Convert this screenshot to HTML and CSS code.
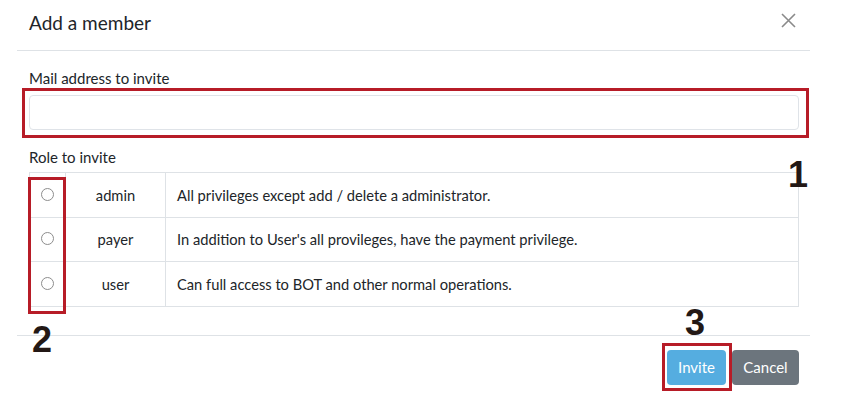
FILE: index.html
```html
<!DOCTYPE html>
<html lang="en">
<head>
<meta charset="utf-8">
<title>Add a member</title>
<link rel="stylesheet" href="styles.css">
</head>
<body>
<div class="modal">
  <div class="modal-header">
    <h5 class="modal-title">Add a member</h5>
    <button class="close" type="button" aria-label="Close">
      <svg width="15" height="15" viewBox="0 0 15 15"><path d="M1 1 L14 14 M14 1 L1 14" stroke="#8a8a8a" stroke-width="1.6" fill="none"/></svg>
    </button>
  </div>
  <div class="modal-body">
    <label class="label">Mail address to invite</label>
    <div class="field">
      <input class="input" type="text">
      <span class="mark mark-input"></span>
    </div>
    <label class="label role-label">Role to invite</label>
    <div class="table-wrap">
      <table class="roles">
        <tr>
          <td class="c-radio"><span class="radio"></span></td>
          <td class="c-role">admin</td>
          <td class="c-desc">All privileges except add / delete a administrator.</td>
        </tr>
        <tr>
          <td class="c-radio"><span class="radio"></span></td>
          <td class="c-role">payer</td>
          <td class="c-desc">In addition to User's all provileges, have the payment privilege.</td>
        </tr>
        <tr>
          <td class="c-radio"><span class="radio"></span></td>
          <td class="c-role">user</td>
          <td class="c-desc">Can full access to BOT and other normal operations.</td>
        </tr>
      </table>
      <span class="mark mark-radio"></span>
      <span class="num num1">1</span>
      <span class="num num2">2</span>
    </div>
  </div>
  <div class="modal-footer">
    <div class="btn-wrap">
      <button class="btn btn-invite" type="button">Invite</button>
      <span class="mark mark-btn"></span>
      <span class="num num3">3</span>
    </div>
    <button class="btn btn-cancel" type="button">Cancel</button>
  </div>
</div>
</body>
</html>
```

FILE: styles.css
```css
* { box-sizing: border-box; }
html, body { margin: 0; padding: 0; background: #fff; }
body {
  font-family: Lato, "Noto Sans", sans-serif;
  color: #212529;
  font-size: 15px;
}
.modal {
  width: 849px;
  height: 404px;
  overflow: hidden;
}
.modal-header {
  margin: 0 39px 0 17px;
  height: 51px;
  border-bottom: 1px solid #dee2e6;
  display: flex;
  align-items: flex-start;
  justify-content: space-between;
  padding: 8px 14px 0 12px;
}
.modal-title {
  margin: 0;
  font-size: 19px;
  font-weight: 400;
  line-height: 30px;
}
.close {
  border: 0;
  background: none;
  padding: 0;
  margin-top: 5px;
  width: 15px;
  height: 15px;
  display: flex;
}
.modal-body {
  padding: 16px 50px 0 29px;
}
.label {
  display: block;
  font-size: 15px;
  line-height: 22px;
  margin: 0;
}
.field {
  position: relative;
  margin-top: 6px;
}
.input {
  display: block;
  width: 770px;
  height: 35px;
  border: 1px solid #dfe3e8;
  border-radius: 4px;
  background: #fff;
  font: inherit;
}
.mark {
  position: absolute;
  border: 3px solid #b71c27;
  pointer-events: none;
}
.mark-input {
  left: -7px;
  top: -7px;
  width: 787px;
  height: 50px;
}
.role-label { margin-top: 16px; }
.table-wrap {
  position: relative;
  margin-top: 4px;
  width: 770px;
}
.roles {
  width: 770px;
  border-collapse: collapse;
  font-size: 14.7px;
}
.roles td {
  border: 1px solid #dee2e6;
  height: 44.5px;
  padding: 0 11px;
  vertical-align: middle;
}
.c-radio { width: 36px; text-align: center; }
.c-role { width: 100px; text-align: center; }
.radio {
  display: block;
  width: 13px;
  height: 13px;
  border: 1px solid #8d8d8d;
  border-radius: 50%;
  margin: -1px auto 0;
}
.mark-radio {
  left: -1px;
  top: 5px;
  width: 38px;
  height: 137px;
}
.num {
  position: absolute;
  font-family: "Liberation Sans", Arial, sans-serif;
  font-weight: 700;
  font-size: 36px;
  line-height: 36px;
  color: #231815;
}
.num1 { left: 759px; top: -15px; }
.num2 { left: 3px; top: 150px; }
.modal-footer {
  margin: 28px 39px 0 17px;
  border-top: 1px solid #dee2e6;
  padding-top: 14px;
  display: flex;
  justify-content: flex-end;
  gap: 6px;
  padding-right: 11px;
}
.btn-wrap { position: relative; }
.btn {
  border: 0;
  border-radius: 4px;
  height: 35px;
  font-family: inherit;
  font-size: 15px;
  color: #fff;
  padding: 0 11px;
}
.btn-invite { background: #55ade0; width: 59px; }
.btn-cancel { background: #6c757d; width: 67px; }
.mark-btn {
  left: -5px;
  top: -7px;
  width: 70px;
  height: 48px;
}
.num3 { left: 18px; top: -45px; }
```
